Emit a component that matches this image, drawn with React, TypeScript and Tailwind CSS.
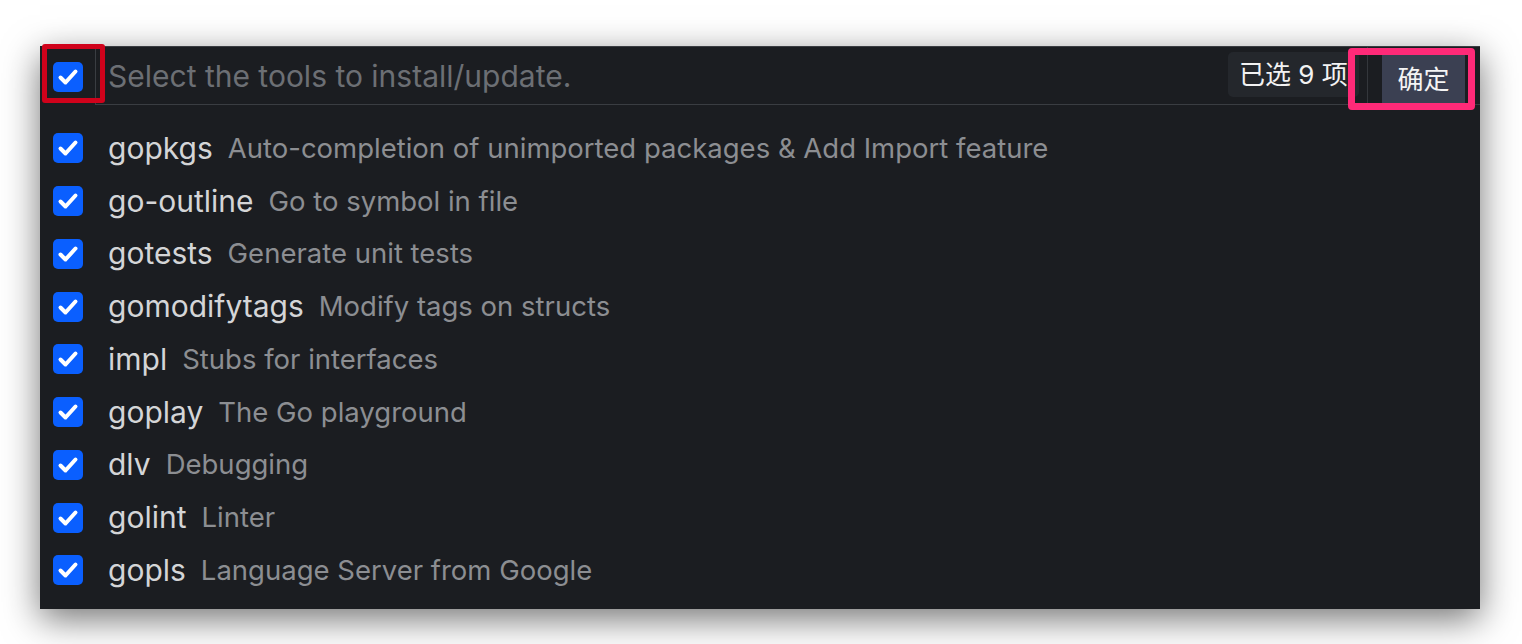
import React from "react";

const TOOLS: [string, string][] = [
  ["gopkgs", "Auto-completion of unimported packages & Add Import feature"],
  ["go-outline", "Go to symbol in file"],
  ["gotests", "Generate unit tests"],
  ["gomodifytags", "Modify tags on structs"],
  ["impl", "Stubs for interfaces"],
  ["goplay", "The Go playground"],
  ["dlv", "Debugging"],
  ["golint", "Linter"],
  ["gopls", "Language Server from Google"],
];

function Check() {
  return (
    <span className="flex h-[30px] w-[30px] shrink-0 items-center justify-center rounded-[5px] bg-[#0a5fff]">
      <svg width="30" height="30" viewBox="0 0 30 30" fill="none">
        <path d="M7.5 15.5 L12.5 20.5 L22.5 9.5" stroke="#fff" strokeWidth="4" strokeLinecap="round" strokeLinejoin="round" />
      </svg>
    </span>
  );
}

export default function App() {
  return (
    <div className="min-h-screen bg-white pt-[40px] pl-[40px]" style={{ fontFamily: "Inter, 'Noto Sans CJK SC', sans-serif" }}>
      <div className="relative h-[563px] w-[1440px] bg-[#1b1d21] shadow-[0_10px_34px_rgba(0,0,0,0.55)]">
        {/* header */}
        <div className="relative mt-[6px] flex h-[59px]">
          <div className="flex w-[55px] shrink-0 items-center pl-[13px] pt-[2px]">
            <Check />
          </div>
          <div className="flex flex-1 items-center border-y border-l border-[#3a3d42] bg-[#1b1d21]">
            <span className="flex-1 pl-[12px] pt-[2px] text-[30px] text-[#6c6f74]">Select the tools to install/update.</span>
            <span className="mb-[3px] flex h-[45px] w-[131px] items-center rounded-[5px] bg-[#24272c] pl-[11px] text-[26px] text-[#f2f2f2]">
              已选 9 项
            </span>
            <span className="ml-[8px] h-full w-px bg-[#34373c]" />
            <div className="flex h-full w-[112px] items-end pl-[14px]">
              <span className="flex h-[49px] w-[83px] items-center justify-center bg-[#3b4052] text-[26px] text-[#f4f4f4]">确定</span>
            </div>
          </div>
          <div className="pointer-events-none absolute left-[2px] top-[-2px] h-[59px] w-[63px] rounded-[3px] border-[5px] border-[#d0021b]" />
          <div className="pointer-events-none absolute left-[1308px] top-[2px] h-[62px] w-[127px] rounded-[4px] border-[7px] border-[#ff2a78]" />
        </div>
        {/* list */}
        <div className="flex flex-col pt-[17px]">
          {TOOLS.map(([name, desc]) => (
            <div key={name} className="flex h-[52.75px] items-center pl-[13px]">
              <Check />
              <span className="ml-[25px] text-[30px] text-[#d4d5d7]">{name}</span>
              <span className="ml-[15px] text-[27.5px] text-[#8c8e92]">{desc}</span>
            </div>
          ))}
        </div>
      </div>
    </div>
  );
}
